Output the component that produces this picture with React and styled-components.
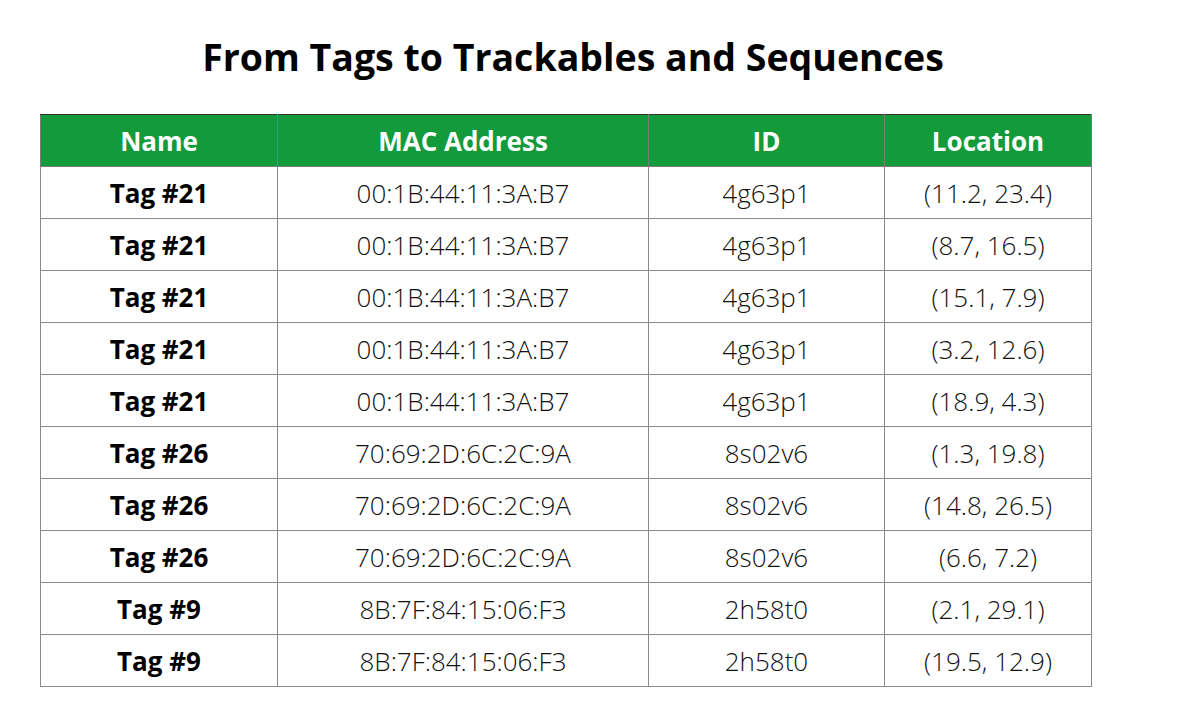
import React from 'react'
import styled, { createGlobalStyle } from 'styled-components'

const GlobalStyle = createGlobalStyle`
  html, body {
    margin: 0;
    padding: 0;
    background: #fff;
    font-family: 'Open Sans', 'Liberation Sans', sans-serif;
  }
`

const Page = styled.div`
  width: 1200px;
  height: 725px;
  padding: 32px 0 0 40px;
  box-sizing: border-box;
`

const Title = styled.h1`
  margin: 0 0 32px;
  width: 1066px;
  text-align: center;
  font-size: 37.5px;
  line-height: 50px;
  font-weight: 700;
  color: #000;
`

const Table = styled.table`
  border-collapse: collapse;
  width: 1051px;
  table-layout: fixed;
  border: 1px solid #333;
`

const HeadCell = styled.th`
  background: #139a3b;
  color: #fff;
  font-size: 26px;
  font-weight: 700;
  height: 51px;
  padding: 0;
  border: 1px solid #7a7a7a;
  border-top: 1px solid #333;
`

const Cell = styled.td`
  height: 51px;
  padding: 0;
  text-align: center;
  font-size: 26px;
  color: ${(p) => (p.$bold ? '#000' : '#111')};
  font-weight: ${(p) => (p.$bold ? 700 : 300)};
  border: 1px solid #8a8a8a;
`

const columns = [
  { label: 'Name', width: 237 },
  { label: 'MAC Address', width: 371 },
  { label: 'ID', width: 236 },
  { label: 'Location', width: 207 },
]

const rows = [
  ['Tag #21', '00:1B:44:11:3A:B7', '4g63p1', '(11.2, 23.4)'],
  ['Tag #21', '00:1B:44:11:3A:B7', '4g63p1', '(8.7, 16.5)'],
  ['Tag #21', '00:1B:44:11:3A:B7', '4g63p1', '(15.1, 7.9)'],
  ['Tag #21', '00:1B:44:11:3A:B7', '4g63p1', '(3.2, 12.6)'],
  ['Tag #21', '00:1B:44:11:3A:B7', '4g63p1', '(18.9, 4.3)'],
  ['Tag #26', '70:69:2D:6C:2C:9A', '8s02v6', '(1.3, 19.8)'],
  ['Tag #26', '70:69:2D:6C:2C:9A', '8s02v6', '(14.8, 26.5)'],
  ['Tag #26', '70:69:2D:6C:2C:9A', '8s02v6', '(6.6, 7.2)'],
  ['Tag #9', '8B:7F:84:15:06:F3', '2h58t0', '(2.1, 29.1)'],
  ['Tag #9', '8B:7F:84:15:06:F3', '2h58t0', '(19.5, 12.9)'],
]

export default function App() {
  return (
    <Page>
      <GlobalStyle />
      <Title>From Tags to Trackables and Sequences</Title>
      <Table>
        <colgroup>
          {columns.map((c) => (
            <col key={c.label} style={{ width: c.width }} />
          ))}
        </colgroup>
        <thead>
          <tr>
            {columns.map((c) => (
              <HeadCell key={c.label}>{c.label}</HeadCell>
            ))}
          </tr>
        </thead>
        <tbody>
          {rows.map((r, i) => (
            <tr key={i}>
              {r.map((v, j) => (
                <Cell key={j} $bold={j === 0}>
                  {v}
                </Cell>
              ))}
            </tr>
          ))}
        </tbody>
      </Table>
    </Page>
  )
}
